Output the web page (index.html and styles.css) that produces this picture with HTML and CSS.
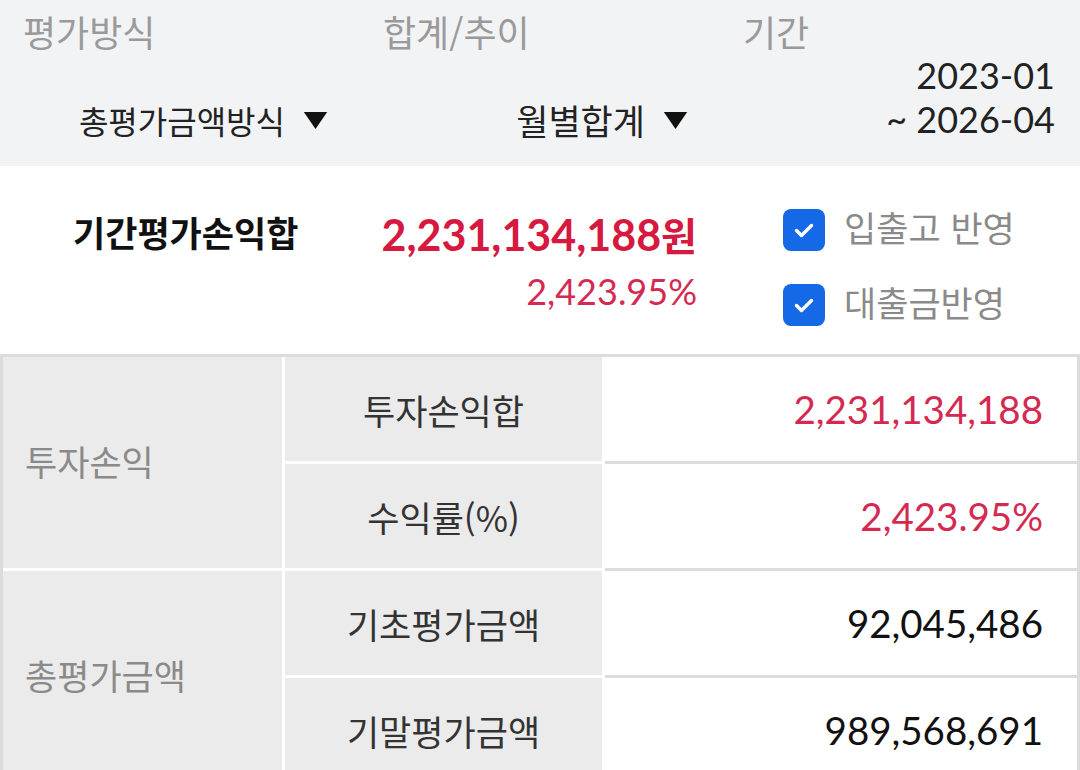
FILE: index.html
```html
<!DOCTYPE html>
<html lang="ko">
<head>
<meta charset="utf-8">
<link rel="stylesheet" href="styles.css">
</head>
<body>
<div class="page">
  <div class="header">
    <div class="hcol">
      <div class="hlabel">평가방식</div>
      <div class="hvalue hv-sm"><span>총평가금액방식</span><svg class="tri" viewBox="0 0 22 16"><path d="M0 0H22L11 16Z" fill="#111"/></svg></div>
    </div>
    <div class="hcol">
      <div class="hlabel">합계/추이</div>
      <div class="hvalue"><span>월별합계</span><svg class="tri" viewBox="0 0 22 16"><path d="M0 0H22L11 16Z" fill="#111"/></svg></div>
    </div>
    <div class="hcol hcol-last">
      <div class="hlabel">기간</div>
      <div class="hdate">2023-01<br>~ 2026-04</div>
    </div>
  </div>

  <div class="summary">
    <div class="sum-label">기간평가손익합</div>
    <div class="sum-values">
      <div class="sum-amount">2,231,134,188<span class="won">원</span></div>
      <div class="sum-pct">2,423.95%</div>
    </div>
    <div class="sum-checks">
      <div class="check-row"><span class="cbox"><svg viewBox="0 0 42 42"><path d="M13.5 21.5L18.5 26.5L28.5 16.5" fill="none" stroke="#fff" stroke-width="3.4" stroke-linecap="round" stroke-linejoin="round"/></svg></span><span class="clabel">입출고 반영</span></div>
      <div class="check-row"><span class="cbox"><svg viewBox="0 0 42 42"><path d="M13.5 21.5L18.5 26.5L28.5 16.5" fill="none" stroke="#fff" stroke-width="3.4" stroke-linecap="round" stroke-linejoin="round"/></svg></span><span class="clabel">대출금반영</span></div>
    </div>
  </div>

  <div class="table">
    <div class="group g1">투자손익</div>
    <div class="sub r1">투자손익합</div>
    <div class="val r1 red first">2,231,134,188</div>
    <div class="sub r2 sep">수익률(%)</div>
    <div class="val r2 red">2,423.95%</div>

    <div class="group g2 sep">총평가금액</div>
    <div class="sub r3 sep">기초평가금액</div>
    <div class="val r3">92,045,486</div>
    <div class="sub r4 sep">기말평가금액</div>
    <div class="val r4">989,568,691</div>
  </div>
</div>
</body>
</html>
```

FILE: styles.css
```css
* { box-sizing: border-box; }
html, body { margin: 0; padding: 0; background: #fff; }
body {
  width: 1080px;
  height: 770px;
  overflow: hidden;
  font-family: Lato, "Noto Sans CJK KR", sans-serif;
  color: #222;
}

.header {
  display: flex;
  height: 166px;
  background: #f2f3f5;
}
.hcol {
  width: 358px;
  margin-right: 2px;
  display: flex;
  flex-direction: column;
  padding: 8px 30px 0 23px;
}
.hcol-last { width: 360px; margin-right: 0; padding-right: 25px; }
.hlabel {
  font-family: "Noto Sans CJK KR", sans-serif;
  font-size: 36px;
  line-height: 46px;
  color: #9a9a9a;
}
.hvalue {
  margin-top: 44px;
  display: flex;
  justify-content: flex-end;
  align-items: center;
  font-family: "Noto Sans CJK KR", sans-serif;
  font-size: 35px;
  line-height: 44px;
  color: #222;
}
.hv-sm { font-size: 32px; }
.tri { width: 25px; height: 17px; margin-left: 18px; }
.hdate {
  margin-top: -1px;
  text-align: right;
  font-size: 36px;
  line-height: 44px;
  color: #222;
}

.summary {
  display: flex;
  height: 188px;
}
.sum-label {
  width: 340px;
  padding: 42px 0 0 73px;
  font-family: "Noto Sans CJK KR", sans-serif;
  font-weight: 700;
  font-size: 35px;
  line-height: 48px;
  color: #111;
}
.sum-values {
  width: 357px;
  text-align: right;
  padding-top: 40px;
}
.sum-amount {
  font-weight: 700;
  font-size: 43px;
  line-height: 56px;
  color: #d6193f;
}
.won { font-family: "Noto Sans CJK KR", sans-serif; font-size: 39px; }
.sum-pct {
  margin-top: 8px;
  font-size: 36px;
  line-height: 40px;
  color: #d42a52;
}
.sum-checks {
  margin-left: 86px;
  padding-top: 43px;
  display: flex;
  flex-direction: column;
  gap: 33px;
}
.check-row { display: flex; align-items: center; height: 42px; }
.cbox {
  width: 42px;
  height: 42px;
  border-radius: 8px;
  background: #1569e6;
  display: block;
  flex: none;
}
.cbox svg { width: 42px; height: 42px; display: block; }
.clabel {
  margin-left: 19px;
  margin-top: -6px;
  font-family: "Noto Sans CJK KR", sans-serif;
  font-size: 35px;
  line-height: 42px;
  color: #8a8a8a;
}

.table {
  display: grid;
  grid-template-columns: 282px 317px 1fr;
  grid-template-rows: 104px 107px 107px 107px;
  border-top: 3px solid #dcdcdc;
  border-left: 3px solid #dcdcdc;
  border-right: 3px solid #dcdcdc;
  background: #fff;
}
.group {
  grid-column: 1;
  background: #ebebeb;
  border-right: 3px solid #fff;
  display: flex;
  align-items: center;
  padding-left: 22px;
  padding-bottom: 4px;
  font-family: "Noto Sans CJK KR", sans-serif;
  font-size: 35px;
  color: #8a8a8a;
}
.g1 { grid-row: 1 / 3; }
.g2 { grid-row: 3 / 5; }
.sub {
  grid-column: 2;
  background: #ebebeb;
  display: flex;
  align-items: center;
  justify-content: center;
  font-family: "Noto Sans CJK KR", sans-serif;
  font-size: 35px;
  color: #333;
}
.val {
  grid-column: 3;
  display: flex;
  align-items: center;
  justify-content: flex-end;
  padding-right: 34px;
  margin-left: 3px;
  border-top: 3px solid #dcdcdc;
  font-size: 38.5px;
  color: #111;
}
.val.first { border-top: none; }
.sep { border-top: 3px solid #fff; }
.r1 { grid-row: 1; }
.r2 { grid-row: 2; }
.r3 { grid-row: 3; }
.r4 { grid-row: 4; }
.red { color: #d42a52; }
```
